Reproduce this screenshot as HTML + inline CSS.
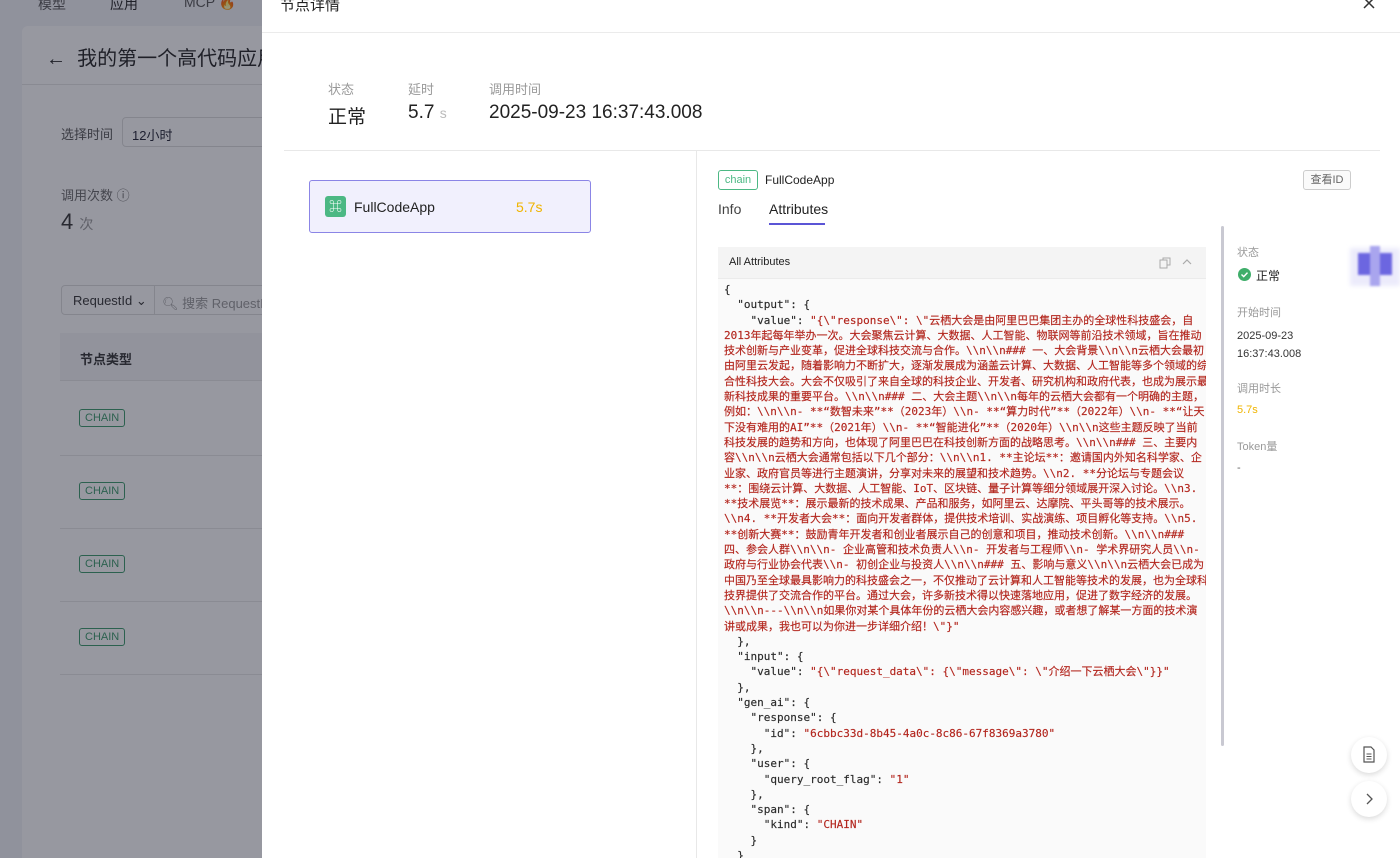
<!DOCTYPE html>
<html><head><meta charset="utf-8"><style>
*{margin:0;padding:0;box-sizing:border-box}
html,body{width:1400px;height:858px;overflow:hidden}
body{font-family:"Liberation Sans","Noto Sans CJK SC",sans-serif;background:#f3f4f7;color:#1f2030}
#wrap{position:relative;width:1400px;height:858px;overflow:hidden}
.abs{position:absolute}
.ov{position:absolute;left:0;top:0;width:262px;height:858px;background:rgba(28,30,48,.46)}
pre{font-family:"DejaVu Sans Mono","Liberation Mono","Noto Sans CJK SC",monospace;font-size:11px;line-height:15.3px;color:#2a2a2a;white-space:pre;-webkit-text-stroke:0.15px currentColor}
.r{color:#b3261e}
.tag{border:1px solid #3a9a6a;color:#3a9a6a;border-radius:3px;font-size:11px;padding:2px 5px;}
</style></head><body><div id="wrap">
<div class="abs" style="left:38px;top:-6px;font-size:14px;color:#555">模型</div>
<div class="abs" style="left:110px;top:-6px;font-size:14px;color:#222">应用</div>
<div class="abs" style="left:184px;top:-6px;font-size:14px;color:#555">MCP 🔥</div>
<div class="abs" style="left:22px;top:26px;width:260px;height:840px;background:#fff;border-radius:6px"></div>
<div class="abs" style="left:22px;top:84px;width:260px;height:1px;background:#e5e5e5"></div>
<div class="abs" style="left:46px;top:42px;font-size:20px;color:#222">←&nbsp; 我的第一个高代码应用</div>
<div class="abs" style="left:61px;top:124px;font-size:13px;color:#555">选择时间</div>
<div class="abs" style="left:122px;top:117px;width:160px;height:30px;border:1px solid #ddd;border-radius:4px;font-size:13px;padding:7px 9px">12小时</div>
<div class="abs" style="left:61px;top:185px;font-size:13px;color:#666">调用次数 ⓘ</div>
<div class="abs" style="left:61px;top:209px;font-size:22px;color:#333">4 <span style="font-size:14px;color:#999">次</span></div>
<div class="abs" style="left:61px;top:285px;width:240px;height:30px;border:1px solid #ddd;border-radius:4px;font-size:13px;color:#333;padding:7px 11px">RequestId ⌄<span style="position:absolute;left:92px;top:0;height:28px;border-left:1px solid #ddd"></span><span style="position:absolute;left:100px;top:7px;color:#999">🔍︎ 搜索 RequestId</span></div>
<div class="abs" style="left:60px;top:333px;width:240px;height:48px;background:#f6f6f8;border-bottom:1px solid #e8e8e8;font-size:13px;font-weight:bold;padding:16px 20px;color:#333">节点类型</div>
<div class="abs" style="left:60px;top:455px;width:240px;height:1px;background:#e8e8e8"></div>
<div class="abs" style="left:60px;top:528px;width:240px;height:1px;background:#e8e8e8"></div>
<div class="abs" style="left:60px;top:601px;width:240px;height:1px;background:#e8e8e8"></div>
<div class="abs" style="left:60px;top:674px;width:240px;height:1px;background:#e8e8e8"></div>
<div class="abs tag" style="left:79px;top:409px">CHAIN</div>
<div class="abs tag" style="left:79px;top:482px">CHAIN</div>
<div class="abs tag" style="left:79px;top:555px">CHAIN</div>
<div class="abs tag" style="left:79px;top:628px">CHAIN</div>
<div class="ov"></div>

<div class="abs" style="left:262px;top:0;width:1138px;height:858px;background:#fff"></div>
<div class="abs" style="left:280px;top:-6px;font-size:15px;color:#222">节点详情</div>
<svg class="abs" style="left:1362px;top:-4px" width="14" height="14" viewBox="0 0 14 14"><path d="M2 2L12 12M12 2L2 12" stroke="#333" stroke-width="1.5"/></svg>
<div class="abs" style="left:262px;top:32px;width:1138px;height:1px;background:#ebebeb"></div>

<div class="abs" style="left:328px;top:79px;font-size:13px;color:#999">状态</div>
<div class="abs" style="left:408px;top:79px;font-size:13px;color:#999">延时</div>
<div class="abs" style="left:489px;top:79px;font-size:13px;color:#999">调用时间</div>
<div class="abs" style="left:328px;top:102px;font-size:19px;color:#222">正常</div>
<div class="abs" style="left:408px;top:102px;font-size:19px;color:#222">5.7 <span style="font-size:14px;color:#bbb">s</span></div>
<div class="abs" style="left:489px;top:102px;font-size:19px;color:#222">2025-09-23 16:37:43.008</div>
<div class="abs" style="left:284px;top:150px;width:1096px;height:1px;background:#e8e8e8"></div>
<div class="abs" style="left:696px;top:151px;width:1px;height:707px;background:#e8e8e8"></div>

<div class="abs" style="left:309px;top:180px;width:282px;height:53px;background:#f1f0fd;border:1px solid #8b85e6;border-radius:3px"></div>
<div class="abs" style="left:325px;top:196px;width:21px;height:21px;background:#4cb884;border-radius:3px;color:#fff;font-size:13px;text-align:center;line-height:21px">⌘</div>
<div class="abs" style="left:354px;top:199px;font-size:14px;color:#222">FullCodeApp</div>
<div class="abs" style="left:516px;top:199px;font-size:14px;color:#f0b400">5.7s</div>

<div class="abs" style="left:718px;top:170px;width:40px;height:20px;border:1px solid #4cb884;border-radius:3px;color:#4cb884;font-size:11px;text-align:center;line-height:18px">chain</div>
<div class="abs" style="left:765px;top:173px;font-size:12px;color:#222">FullCodeApp</div>
<div class="abs" style="left:1303px;top:170px;width:48px;height:20px;border:1px solid #ccc;border-radius:3px;color:#666;font-size:11px;text-align:center;line-height:18px;background:#fafafa">查看ID</div>
<div class="abs" style="left:718px;top:201px;font-size:14px;color:#444">Info</div>
<div class="abs" style="left:769px;top:201px;font-size:14px;color:#222">Attributes</div>
<div class="abs" style="left:769px;top:223px;width:56px;height:2px;background:#5b55d6"></div>
<div class="abs" style="left:1221px;top:226px;width:3px;height:520px;background:#c9c9d2;border-radius:2px"></div>

<div class="abs" style="left:718px;top:247px;width:488px;height:611px;background:#fafafa;overflow:hidden">
<div style="height:32px;background:#f4f4f4;border-bottom:1px solid #ebebeb"></div>
<pre class="abs" style="left:6px;top:35px">{
  "output": {
    "value": <span class="r">"{\"response\": \"云栖大会是由阿里巴巴集团主办的全球性科技盛会，自
2013年起每年举办一次。大会聚焦云计算、大数据、人工智能、物联网等前沿技术领域，旨在推动
技术创新与产业变革，促进全球科技交流与合作。\\n\\n### 一、大会背景\\n\\n云栖大会最初
由阿里云发起，随着影响力不断扩大，逐渐发展成为涵盖云计算、大数据、人工智能等多个领域的综
合性科技大会。大会不仅吸引了来自全球的科技企业、开发者、研究机构和政府代表，也成为展示最
新科技成果的重要平台。\\n\\n### 二、大会主题\\n\\n每年的云栖大会都有一个明确的主题，
例如：\\n\\n- **“数智未来”**（2023年）\\n- **“算力时代”**（2022年）\\n- **“让天
下没有难用的AI”**（2021年）\\n- **“智能进化”**（2020年）\\n\\n这些主题反映了当前
科技发展的趋势和方向，也体现了阿里巴巴在科技创新方面的战略思考。\\n\\n### 三、主要内
容\\n\\n云栖大会通常包括以下几个部分：\\n\\n1. **主论坛**：邀请国内外知名科学家、企
业家、政府官员等进行主题演讲，分享对未来的展望和技术趋势。\\n2. **分论坛与专题会议
**：围绕云计算、大数据、人工智能、IoT、区块链、量子计算等细分领域展开深入讨论。\\n3.
**技术展览**：展示最新的技术成果、产品和服务，如阿里云、达摩院、平头哥等的技术展示。
\\n4. **开发者大会**：面向开发者群体，提供技术培训、实战演练、项目孵化等支持。\\n5.
**创新大赛**：鼓励青年开发者和创业者展示自己的创意和项目，推动技术创新。\\n\\n###
四、参会人群\\n\\n- 企业高管和技术负责人\\n- 开发者与工程师\\n- 学术界研究人员\\n-
政府与行业协会代表\\n- 初创企业与投资人\\n\\n### 五、影响与意义\\n\\n云栖大会已成为
中国乃至全球最具影响力的科技盛会之一，不仅推动了云计算和人工智能等技术的发展，也为全球科
技界提供了交流合作的平台。通过大会，许多新技术得以快速落地应用，促进了数字经济的发展。
\\n\\n---\\n\\n如果你对某个具体年份的云栖大会内容感兴趣，或者想了解某一方面的技术演
讲或成果，我也可以为你进一步详细介绍！\"}"</span>
  },
  "input": {
    "value": <span class="r">"{\"request_data\": {\"message\": \"介绍一下云栖大会\"}}"</span>
  },
  "gen_ai": {
    "response": {
      "id": <span class="r">"6cbbc33d-8b45-4a0c-8c86-67f8369a3780"</span>
    },
    "user": {
      "query_root_flag": <span class="r">"1"</span>
    },
    "span": {
      "kind": <span class="r">"CHAIN"</span>
    }
  }
}</pre>
</div>
<div class="abs" style="left:729px;top:256px;font-size:11px;color:#222">All Attributes</div>
<svg class="abs" style="left:1159px;top:257px" width="12" height="12" viewBox="0 0 12 12"><rect x="1" y="3" width="7" height="8" fill="none" stroke="#aaa"/><path d="M4 3V1h7v7H8" fill="none" stroke="#aaa"/></svg>
<svg class="abs" style="left:1181px;top:257px" width="12" height="10" viewBox="0 0 12 10"><path d="M2 7L6 3L10 7" fill="none" stroke="#aaa" stroke-width="1.2"/></svg>

<div class="abs" style="left:1237px;top:244px;font-size:11px;color:#999">状态</div>
<div class="abs" style="left:1238px;top:268px;width:13px;height:13px;border-radius:50%;background:#3fae6a"></div>
<svg class="abs" style="left:1238px;top:268px" width="13" height="13" viewBox="0 0 13 13"><path d="M3.5 6.5L5.7 8.6L9.5 4.6" fill="none" stroke="#fff" stroke-width="1.4"/></svg>
<div class="abs" style="left:1256px;top:267px;font-size:12px;color:#222">正常</div>
<div class="abs" style="left:1237px;top:304px;font-size:11px;color:#999">开始时间</div>
<div class="abs" style="left:1237px;top:327px;font-size:11px;color:#333;line-height:18px">2025-09-23<br>16:37:43.008</div>
<div class="abs" style="left:1237px;top:380px;font-size:11px;color:#999">调用时长</div>
<div class="abs" style="left:1237px;top:404px;font-size:11px;color:#f0b400">5.7s</div>
<div class="abs" style="left:1237px;top:438px;font-size:11px;color:#999">Token量</div>
<div class="abs" style="left:1237px;top:462px;font-size:11px;color:#666">-</div>

<div class="abs" style="left:1350px;top:248px;width:50px;height:38px;background:#ecebfb;filter:blur(2px)"></div>
<div class="abs" style="left:1358px;top:253px;width:34px;height:22px;background:#6c66e0;filter:blur(1px)"></div>
<div class="abs" style="left:1370px;top:246px;width:10px;height:40px;background:#a9a5ee;filter:blur(1px)"></div>

<div class="abs" style="left:1351px;top:737px;width:36px;height:36px;border-radius:50%;background:#fff;box-shadow:0 2px 6px rgba(0,0,0,.15)"></div>
<svg class="abs" style="left:1362px;top:746px" width="14" height="17" viewBox="0 0 14 17"><path d="M2 1h7l3 3v12H2z" fill="none" stroke="#555" stroke-width="1.2"/><path d="M4.5 8h5M4.5 10.5h5M4.5 13h5" stroke="#555"/></svg>
<div class="abs" style="left:1351px;top:781px;width:36px;height:36px;border-radius:50%;background:#fff;box-shadow:0 2px 6px rgba(0,0,0,.15)"></div>
<svg class="abs" style="left:1364px;top:792px" width="10" height="14" viewBox="0 0 10 14"><path d="M3 2L8 7L3 12" fill="none" stroke="#555" stroke-width="1.3"/></svg>
</div></body></html>
